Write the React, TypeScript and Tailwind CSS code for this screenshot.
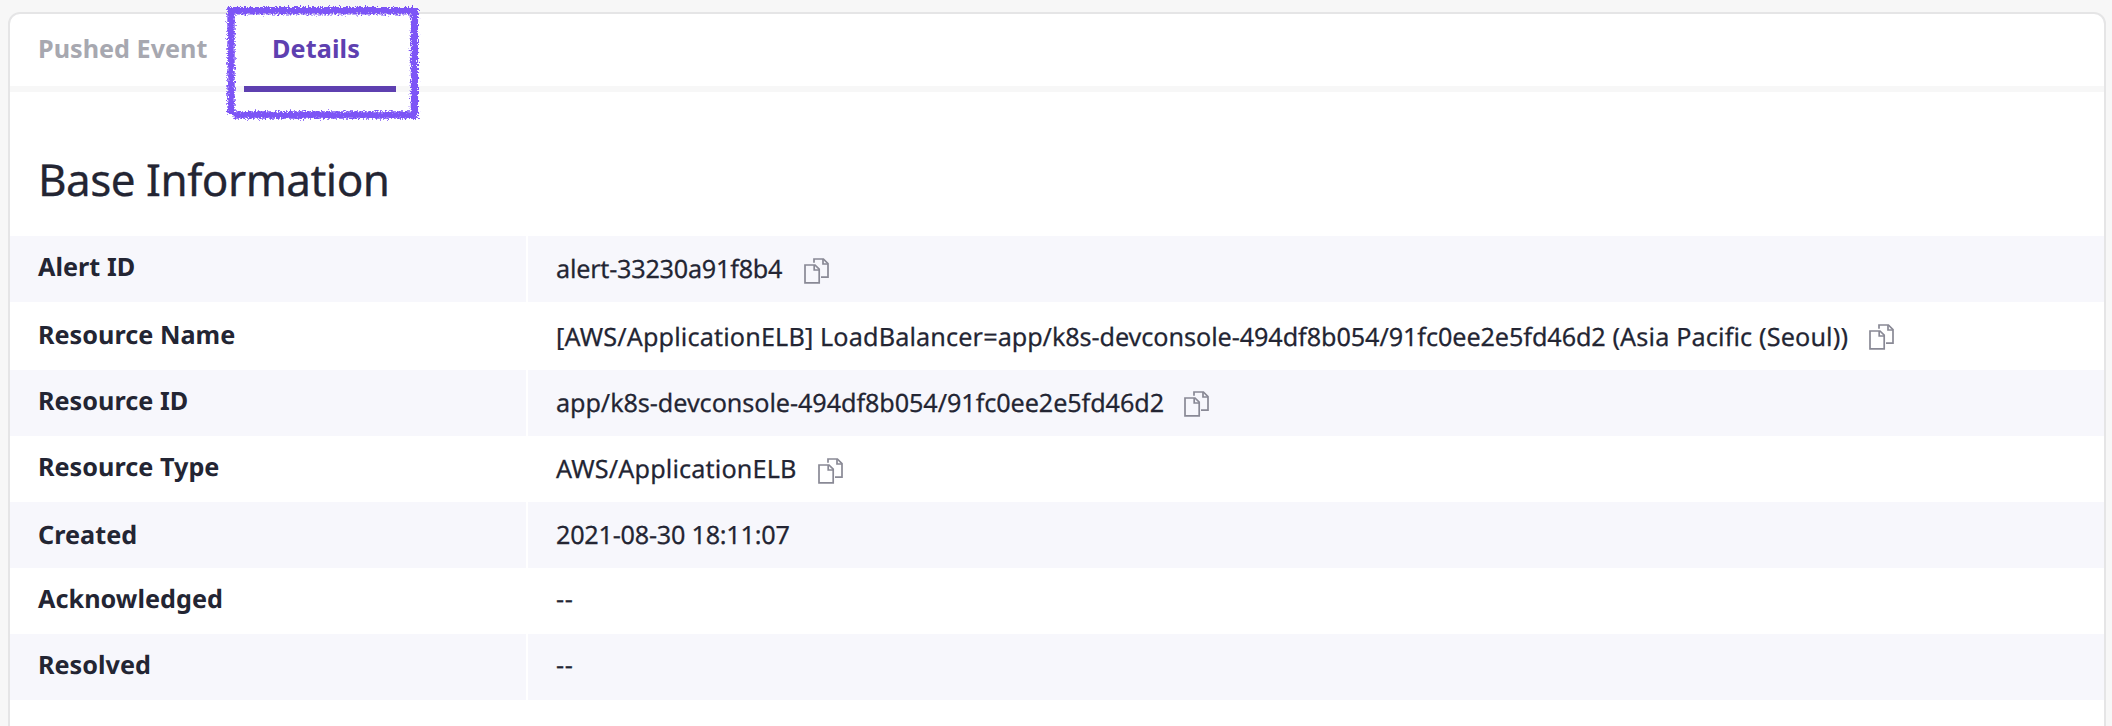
import React from "react";

type Part = [text: string, tracking: string];

type Row = {
  label: string;
  value: Part[];
  height: string;
  labelLine: string;
  valueLine: string;
  icon?: string;
};

const WIDE = "tracking-[0.14px]";
const ID = "tracking-[-0.08px]";
const DIGITS = "tracking-[-0.23px]";
const DASH = "tracking-[0.6px]";

const rows: Row[] = [
  { label: "Alert ID", value: [["alert-33230a91f8b4", DIGITS]], height: "h-[66px]", labelLine: "leading-[62px]", valueLine: "leading-[66px]", icon: "ml-[22px] mt-[22px]" },
  {
    label: "Resource Name",
    value: [
      ["[AWS/ApplicationELB] LoadBalancer=", WIDE],
      ["app/k8s-devconsole-494df8b054/91fc0ee2e5fd46d2", ID],
      [" (Asia Pacific (Seoul))", WIDE],
    ],
    height: "h-[68px]",
    labelLine: "leading-[66px]",
    valueLine: "leading-[70px]",
    icon: "ml-[21px] mt-[22px]",
  },
  { label: "Resource ID", value: [["app/k8s-devconsole-494df8b054/91fc0ee2e5fd46d2", ID]], height: "h-[66px]", labelLine: "leading-[62px]", valueLine: "leading-[66px]", icon: "ml-[20px] mt-[21px]" },
  { label: "Resource Type", value: [["AWS/ApplicationELB", WIDE]], height: "h-[66px]", labelLine: "leading-[62px]", valueLine: "leading-[66px]", icon: "ml-[21px] mt-[22px]" },
  { label: "Created", value: [["2021-08-30 18:11:07", DIGITS]], height: "h-[66px]", labelLine: "leading-[66px]", valueLine: "leading-[66px]" },
  { label: "Acknowledged", value: [["--", DASH]], height: "h-[66px]", labelLine: "leading-[62px]", valueLine: "leading-[62px]" },
  { label: "Resolved", value: [["--", DASH]], height: "h-[66px]", labelLine: "leading-[62px]", valueLine: "leading-[62px]" },
];

function CopyIcon({ className }: { className: string }) {
  return (
    <svg className={"h-[26px] w-[26px] shrink-0 " + className} viewBox="0 0 26 26" fill="none" stroke="#898995" strokeWidth="1.7">
      <path d="M1 7H11L15.2 11.2V24.8H1Z" />
      <path d="M10.2 7V12H15.2" />
      <path d="M10 4.8V1H19.4L24 5.6V19.2H17" />
      <path d="M19 1V6H24" />
    </svg>
  );
}

function CrayonFrame() {
  return (
    <svg className="absolute left-[220px] top-0 h-[126px] w-[206px]" viewBox="0 0 206 126" fill="none">
      <defs>
        <filter id="crayon" x="0" y="0" width="206" height="126" filterUnits="userSpaceOnUse">
          <feTurbulence type="fractalNoise" baseFrequency="0.6" numOctaves="2" seed="7" result="noise" />
          <feDisplacementMap in="SourceGraphic" in2="noise" scale="7" xChannelSelector="R" yChannelSelector="G" />
        </filter>
      </defs>
      <g filter="url(#crayon)" stroke="#7d55f6" strokeWidth="7.4">
        <path d="M7.4 10.8H198" />
        <path d="M11 8V114" />
        <path d="M194.4 8V118.6" />
        <path d="M13.5 115H198" />
      </g>
    </svg>
  );
}

export default function App() {
  return (
    <div className="relative h-[726px] w-full overflow-hidden bg-[#f7f7f7] pl-2 pr-[6px] pt-3 font-['Noto_Sans',sans-serif] text-[25.2px] text-[#232533] [text-rendering:geometricPrecision]">
      <main className="h-[760px] overflow-hidden rounded-xl border-2 border-[#e5e5e6] bg-white">
        <nav className="flex h-[78px] font-bold leading-[68px]">
          <button className="w-[234px] border-b-[6px] border-[#f7f7f7] pl-7 pb-1 text-left text-[#a7a8b0]">Pushed Event</button>
          <button className="w-[152px] border-b-[6px] border-[#5e40b0] pl-7 pb-1 text-left tracking-[0.1px] text-[#5e40b0]">Details</button>
          <div className="flex-1 border-b-[6px] border-[#f7f7f7]" />
        </nav>
        <h1 className="h-36 pl-7 pt-[30px] text-[44px] leading-[114px] tracking-[-0.5px] [-webkit-text-stroke:0.3px]">Base Information</h1>
        <dl>
          {rows.map((r, i) => (
            <div key={r.label} className={"flex gap-0.5 " + r.height}>
              <dt className={"w-[516px] pl-7 font-bold tracking-[0.03px] " + r.labelLine + (i % 2 === 0 ? " bg-[#f7f7fc]" : "")}>{r.label}</dt>
              <dd className={"flex flex-1 pl-7 " + r.valueLine + (i % 2 === 0 ? " bg-[#f7f7fc]" : "")}>
                <span className="whitespace-pre [-webkit-text-stroke:0.25px]">
                  {r.value.map(([text, tracking]) => (
                    <span key={text} className={tracking}>{text}</span>
                  ))}
                </span>
                {r.icon && <CopyIcon className={r.icon} />}
              </dd>
            </div>
          ))}
        </dl>
      </main>
      <CrayonFrame />
    </div>
  );
}
